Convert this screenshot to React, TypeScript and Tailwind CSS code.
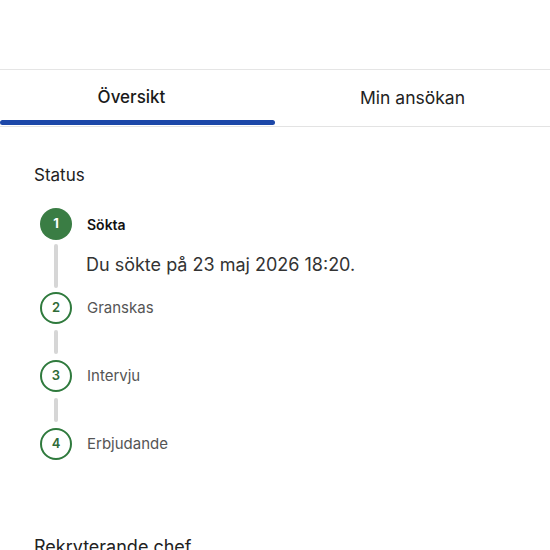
import React from "react";

const steps = [
  { n: 1, label: "Sökta", done: true, desc: "Du sökte på 23 maj 2026 18:20." },
  { n: 2, label: "Granskas", done: false },
  { n: 3, label: "Intervju", done: false },
  { n: 4, label: "Erbjudande", done: false },
];

export default function App() {
  return (
    <div className="w-[550px] h-[550px] overflow-hidden bg-white text-[#1d1d1d]" style={{ fontFamily: 'Inter, "Liberation Sans", sans-serif' }}>
      <div className="h-[70px] border-b border-[#e5e5e5]" />
      <div className="flex border-b border-[#e3e3e3]">
        <div className="flex-1 relative h-[56px] flex items-center justify-center">
          <span className="text-[17px] font-medium text-[#1a1a1a] -ml-[12px]">Översikt</span>
          <div className="absolute left-0 right-0 bottom-[1px] h-[5px] rounded-full bg-[#1c47a8]" />
        </div>
        <div className="flex-1 h-[56px] flex items-center justify-center">
          <span className="text-[17.5px] text-[#222]">Min ansökan</span>
        </div>
      </div>
      <div className="px-[34px] pt-[37px]">
        <div className="text-[17px] text-[#222] leading-[22px]">Status</div>
        <div className="mt-[22px] pl-[6px]">
          {steps.map((s, i) => (
            <div key={s.n}>
              <div className="flex items-center h-[32px]">
                <div
                  className={
                    s.done
                      ? "w-[32px] h-[32px] rounded-full bg-[#3a7d44] text-white flex items-center justify-center text-[13px] font-bold"
                      : "w-[32px] h-[32px] rounded-full border-2 border-[#2f7a3d] text-[#2f6b37] flex items-center justify-center text-[13px] font-semibold"
                  }
                >
                  {s.n}
                </div>
                <span className={s.done ? "ml-[15px] text-[14px] font-semibold text-[#111]" : "ml-[15px] text-[15px] text-[#555]"}>{s.label}</span>
              </div>
              {i < steps.length - 1 && (
                <div className="flex">
                  <div className="w-[32px] flex justify-center">
                    <div className={s.desc ? "w-[4px] h-[44px] my-[4px] bg-[#d6d6d6] rounded-full" : "w-[4px] h-[24px] my-[6px] bg-[#d6d6d6] rounded-full"} />
                  </div>
                  {s.desc && (
                    <div className="ml-[14px] pt-[12px] text-[18px] leading-[26px] text-[#333]">{s.desc}</div>
                  )}
                </div>
              )}
            </div>
          ))}
        </div>
        <div className="mt-[75px] text-[18px] leading-[24px] text-[#222]">Rekryterande chef</div>
      </div>
    </div>
  );
}
